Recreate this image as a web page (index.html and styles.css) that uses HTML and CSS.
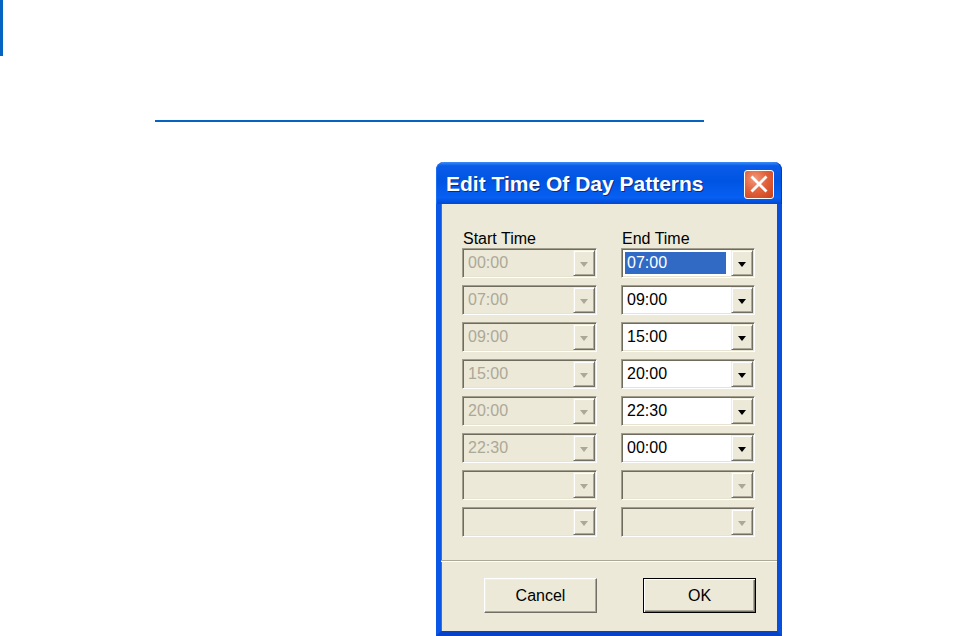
FILE: index.html
```html
<!DOCTYPE html>
<html lang="en">
<head>
  <meta charset="UTF-8" />
  <meta name="viewport" content="width=device-width, initial-scale=1.0"/>
  <title>Edit Time Of Day Patterns</title>
  <link rel="stylesheet" href="styles.css">
</head>
<body>

<div class="edge-mark"></div>
<div class="rule"></div>

<!-- DIALOG -->
<div class="window">
  <div class="titlebar">
    <span class="title">Edit Time Of Day Patterns</span>
    <button class="close-btn" aria-label="Close">
      <svg width="30" height="29" viewBox="0 0 30 29">
        <path d="M8.5 7.5 L21.5 20.5 M21.5 7.5 L8.5 20.5" stroke="#fff" stroke-width="2.8" stroke-linecap="square"/>
      </svg>
    </button>
  </div>

  <div class="client">
    <div class="columns">
      <div class="column">
        <div class="label">Start Time</div>
        <div class="combo disabled"><div class="field"><span>00:00</span></div><div class="drop"><i></i></div></div>
        <div class="combo disabled"><div class="field"><span>07:00</span></div><div class="drop"><i></i></div></div>
        <div class="combo disabled"><div class="field"><span>09:00</span></div><div class="drop"><i></i></div></div>
        <div class="combo disabled"><div class="field"><span>15:00</span></div><div class="drop"><i></i></div></div>
        <div class="combo disabled"><div class="field"><span>20:00</span></div><div class="drop"><i></i></div></div>
        <div class="combo disabled"><div class="field"><span>22:30</span></div><div class="drop"><i></i></div></div>
        <div class="combo disabled"><div class="field"><span></span></div><div class="drop"><i></i></div></div>
        <div class="combo disabled"><div class="field"><span></span></div><div class="drop"><i></i></div></div>
      </div>

      <div class="column">
        <div class="label">End Time</div>
        <div class="combo"><div class="field"><span class="selected">07:00</span></div><div class="drop"><i></i></div></div>
        <div class="combo"><div class="field"><span>09:00</span></div><div class="drop"><i></i></div></div>
        <div class="combo"><div class="field"><span>15:00</span></div><div class="drop"><i></i></div></div>
        <div class="combo"><div class="field"><span>20:00</span></div><div class="drop"><i></i></div></div>
        <div class="combo"><div class="field"><span>22:30</span></div><div class="drop"><i></i></div></div>
        <div class="combo"><div class="field"><span>00:00</span></div><div class="drop"><i></i></div></div>
        <div class="combo disabled"><div class="field"><span></span></div><div class="drop"><i></i></div></div>
        <div class="combo disabled"><div class="field"><span></span></div><div class="drop"><i></i></div></div>
      </div>
    </div>

    <div class="separator"></div>

    <div class="actions">
      <button class="btn">Cancel</button>
      <button class="btn default">OK</button>
    </div>
  </div>
</div>

</body>
</html>
```

FILE: styles.css
```css
body {
  margin: 0;
  background: #fff;
  font-family: "Liberation Sans", Arial, sans-serif;
  font-size: 16px;
}

.edge-mark {
  width: 3px;
  height: 56px;
  background: #0563c1;
}

.rule {
  margin: 64px 0 0 155px;
  width: 549px;
  height: 2px;
  background: #0563c1;
}

/* window */

.window {
  width: 346px;
  margin: 40px 0 0 436px;
}

.titlebar {
  height: 42px;
  box-sizing: border-box;
  display: flex;
  align-items: center;
  justify-content: space-between;
  padding: 2px 8px 0 10px;
  border-radius: 8px 8px 0 0;
  background: linear-gradient(to bottom, #3d8ef9 0, #0a5ce8 9%, #0054e3 45%, #0760f2 85%, #0047d3 100%);
  box-shadow: inset 1px 0 #1a6cf0, inset -1px 0 #003cc6;
}

.title {
  color: #fff;
  font-weight: bold;
  font-size: 21px;
  text-shadow: 1px 1px 0 #0a2a84;
}

.close-btn {
  width: 30px;
  height: 29px;
  padding: 0;
  border: 1px solid #fff;
  border-radius: 3px;
  background: radial-gradient(circle at 35% 30%, #f29a7c 0, #e2623c 45%, #c9401a 100%);
  display: flex;
  align-items: center;
  justify-content: center;
}

.close-btn svg {
  display: block;
  margin: -1px;
}

.client {
  height: 432px;
  box-sizing: border-box;
  background: #ece9d8;
  border: 5px solid #0a56e6;
  border-top: 0;
  border-right-color: #0850dc;
  border-bottom-color: #0842c8;
  padding-top: 26px;
  box-shadow: inset 1px 0 #2a74f0;
}

.columns {
  display: flex;
  gap: 24px;
  padding-left: 21px;
}

.column {
  display: flex;
  flex-direction: column;
  gap: 7px;
  width: 134px;
}

.column:first-child {
  width: 135px;
}

.label {
  height: 18px;
  line-height: 18px;
  padding-left: 1px;
  margin-bottom: -7px;
  color: #000;
}

/* combo boxes */

.combo {
  display: flex;
  height: 30px;
  box-sizing: border-box;
  border: 1px solid;
  border-color: #a09d8d #fff #fff #a09d8d;
  box-shadow: inset 1px 1px #6f6c5f, inset -1px -1px #e6e3d3;
  padding: 1px;
  background: #fff;
}

.combo.disabled {
  background: #ece9d8;
}

.field {
  flex: 1;
  display: flex;
  padding: 2px 5px 2px 2px;
}

.field span {
  flex: 1;
  line-height: 22px;
  padding-left: 2px;
  color: #000;
}

.combo.disabled .field span {
  color: #aca899;
}

.field span.selected {
  background: #316ac5;
  color: #fff;
}

.drop {
  width: 22px;
  box-sizing: border-box;
  background: #ece9d8;
  border: 1px solid;
  border-color: #f1efe2 #716f64 #716f64 #f1efe2;
  box-shadow: inset 1px 1px #fff, inset -1px -1px #aca899;
  display: flex;
  align-items: center;
  justify-content: center;
}

.drop i {
  width: 0;
  height: 0;
  border-left: 4px solid transparent;
  border-right: 4px solid transparent;
  border-top: 5px solid #000;
  margin-top: 2px;
}

.combo.disabled .drop i {
  border-top-color: #aca899;
}

/* bottom */

.separator {
  margin-top: 23px;
  height: 1px;
  background: #aca899;
  border-bottom: 1px solid #fff;
}

.actions {
  display: flex;
  gap: 46px;
  padding: 16px 0 0 43px;
}

.btn {
  width: 113px;
  height: 35px;
  box-sizing: border-box;
  font-family: "Liberation Sans", Arial, sans-serif;
  font-size: 16px;
  color: #000;
  background: #ece9d8;
  border: 1px solid;
  border-color: #fff #716f64 #716f64 #fff;
  box-shadow: inset -1px -1px #aca899, inset 1px 1px #f1efe2;
  padding: 0;
}

.btn.default {
  border-color: #000;
  box-shadow: inset 1px 1px #fff, inset -1px -1px #716f64, inset -2px -2px #aca899;
}
```
